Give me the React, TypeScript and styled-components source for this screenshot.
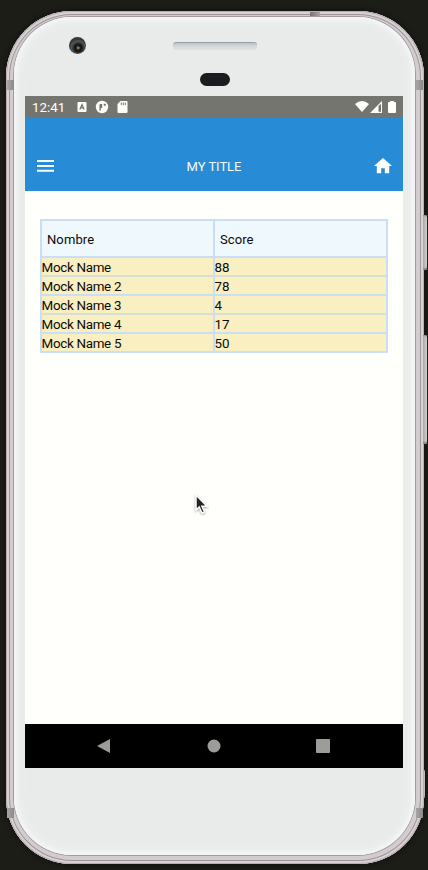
import React from "react";
import styled, { createGlobalStyle } from "styled-components";

const GlobalStyle = createGlobalStyle`
  * { box-sizing: border-box; }
  html, body { margin: 0; padding: 0; background: #1c1d17; }
  body { font-family: Roboto, "Liberation Sans", sans-serif; }
`;

const Desk = styled.main`
  width: 428px;
  height: 870px;
  padding: 11px 0 0 6px;
  overflow: hidden;
  background: #1c1d17;
`;

const Phone = styled.div`
  position: relative;
  width: 418px;
  height: 853px;
  border-radius: 66px;
  padding: 6px 9px 9px 8px;
  background: #d3cccf;
  box-shadow:
    inset 0 0 0 1px #b5aeb1,
    inset 0 0 0 3px #d9d1d4,
    inset 0 0 0 4px #9d969a,
    inset 0 0 0 6px #d3cccf,
    0 0 5px 1px #11120e;
`;

const Face = styled.div`
  display: flex;
  flex-direction: column;
  height: 838px;
  border-radius: 58px;
  padding: 0 12px 0 11px;
  background: #e8ebea;
  box-shadow:
    0 0 0 1px #a09a9d,
    inset 0 0 3px 3px #f3f5f4,
    inset 0 0 9px 5px #eef1f0;
`;

const Forehead = styled.div`
  display: grid;
  grid-template-columns: 148px 83px 147px;
  align-items: start;
  height: 79px;
  flex: none;
`;

const Camera = styled.div`
  width: 17px;
  height: 17px;
  margin: 20px 0 0 44px;
  border-radius: 50%;
  background: radial-gradient(circle at 54% 64%, #927346 0 1px, #17191b 2px 4px, #33383a 5px, #53575a 7px, #35393b 8.5px);
`;

const Earpiece = styled.div`
  display: flex;
  flex-direction: column;
  align-items: center;
  gap: 23px;
  padding-top: 25px;
`;

const Speaker = styled.div`
  width: 84px;
  height: 8px;
  border-radius: 3px;
  border-top: 1px solid #9aa1a3;
  background: linear-gradient(#c1c6c8 0 1px, #d3d7d8 3px, #dde2e4);
`;

const Sensor = styled.div`
  width: 30px;
  height: 13px;
  border-radius: 7px;
  background: #1a1c21;
`;

const Screen = styled.div`
  display: flex;
  flex-direction: column;
  width: 378px;
  height: 672px;
  flex: none;
  background: #fffffc;
`;

const StatusBar = styled.div`
  display: flex;
  align-items: center;
  height: 22px;
  padding: 0 6px 0 7px;
  background: #757570;
  color: #fffffc;
  svg { display: block; }
`;

const Clock = styled.span`
  width: 45px;
  padding-top: 1px;
  font-size: 13.3px;
  line-height: 21px;
`;

const Notices = styled.div`
  display: flex;
  flex: 1;
`;

const AppBar = styled.header`
  display: grid;
  grid-template-columns: 24px 1fr 24px;
  align-items: center;
  height: 73px;
  padding: 25px 8px 0 8px;
  background: #278cd5;
  color: #f4fbfc;
  svg { display: block; }
`;

const Title = styled.h1`
  margin: 0;
  text-align: center;
  font-size: 13px;
  font-weight: 400;
  line-height: 20px;
  letter-spacing: -0.05px;
`;

const Content = styled.section`
  height: 533px;
  padding: 28px 15px 0;
`;

const ScoreTable = styled.div`
  width: 348px;
  padding: 0 2px 2px;
  background: #cbdff4;
  color: #0b0b0a;
`;

const Row = styled.div<{ $header?: boolean; $muted?: boolean }>`
  display: grid;
  grid-template-columns: 171px 171px;
  grid-template-rows: ${(p) => (p.$header ? 35 : 17)}px;
  column-gap: 2px;
  height: ${(p) => (p.$header ? 37 : 19)}px;
  border-top: 2px solid ${(p) => (p.$muted ? "#d6dfd7" : "#c8dff7")};
`;

const Cell = styled.div<{ $header?: boolean; $numeric?: boolean }>`
  padding-left: ${(p) => (p.$header ? 5 : 0)}px;
  text-indent: ${(p) => (p.$header ? 0 : -0.5)}px;
  background: ${(p) => (p.$header ? "#eff8fd" : "#faefc0")};
  font-size: ${(p) => (p.$header ? 13 : 13.4)}px;
  line-height: ${(p) => (p.$header ? 38 : 19)}px;
  letter-spacing: ${(p) => (p.$header ? 0.1 : p.$numeric ? 0 : -0.3)}px;
  white-space: nowrap;
`;

const NavBar = styled.nav`
  display: flex;
  justify-content: space-between;
  align-items: center;
  height: 44px;
  padding: 0 73px 0 72px;
  background: #000;
  svg { display: block; }
`;

const SideKey = styled.div<{ $top: number; $height: number; $thin?: boolean }>`
  position: absolute;
  top: ${(p) => p.$top}px;
  right: ${(p) => (p.$thin ? -1 : -3)}px;
  width: ${(p) => (p.$thin ? 1 : 4)}px;
  height: ${(p) => p.$height}px;
  border-radius: 0 2px 2px 0;
  background: linear-gradient(90deg, #a9a4a6, #d2cfd0);
  box-shadow: inset 0 -3px 1px -1px #8f8b8d, inset 0 2px 1px -1px #8f8b8d;
`;

const AntennaBand = styled.div<{ $side: "left" | "right"; $top: number }>`
  position: absolute;
  top: ${(p) => p.$top}px;
  ${(p) => p.$side}: 1px;
  width: 7px;
  height: 10px;
  background: linear-gradient(90deg, #aaa4a6, #8d888a);
`;

const TopBand = styled.div`
  position: absolute;
  top: 1px;
  left: 304px;
  width: 10px;
  height: 4px;
  background: linear-gradient(90deg, #777174, #aaa3a6);
`;

const Pointer = styled.svg`
  position: absolute;
  left: 187px;
  top: 481px;
`;

const players = [
  { name: "Mock Name", score: 88 },
  { name: "Mock Name 2", score: 78 },
  { name: "Mock Name 3", score: 4 },
  { name: "Mock Name 4", score: 17 },
  { name: "Mock Name 5", score: 50 },
];

const NoticeIcons = () => (
  <svg width="52" height="14" viewBox="0 0 52 14">
    <rect x="0.5" y="2" width="9" height="10" rx="1" fill="#fffffc" />
    <path d="M2.8 9.5 5 4.5l2.2 5M3.7 7.8h2.7" fill="none" stroke="#757570" strokeWidth="1.2" />
    <circle cx="25" cy="7" r="6.2" fill="#fffffc" />
    <path d="M22.4 10.8V5.2q0-1.3 1.3-1.3h1.5v4h-1.4v2.9zM26.8 3.7h2v2h-2z" fill="#757570" />
    <path d="M43.5 1h6q1 0 1 1v10q0 1-1 1h-8q-1 0-1-1V4z" fill="#fffffc" />
    <path d="M44.3 2.5v2.7M46.3 2.5v2.7M48.3 2.5v2.7" stroke="#757570" strokeWidth="1" />
  </svg>
);

const SignalIcons = () => (
  <svg width="42" height="14" viewBox="0 0 42 14">
    <path d="M0 4Q7-1.8 14 4L7 12z" fill="#fffffc" />
    <path d="M27 1v12H15z" fill="#fffffc" />
    <path d="M23.5 6 26 3.8v8h-2.5z" fill="#757570" />
    <path d="M35 1h4v1h1q1 0 1 1v9q0 1-1 1h-6q-1 0-1-1V3q0-1 1-1h1z" fill="#fffffc" />
  </svg>
);

export default function App() {
  return (
    <>
      <GlobalStyle />
      <Desk>
        <Phone>
          <TopBand />
          <AntennaBand $side="left" $top={69} />
          <AntennaBand $side="right" $top={69} />
          <AntennaBand $side="left" $top={797} />
          <AntennaBand $side="right" $top={797} />
          <SideKey $top={204} $height={55} />
          <SideKey $top={324} $height={109} />
          <SideKey $top={759} $height={28} $thin />
          <Face>
            <Forehead>
              <Camera />
              <Earpiece>
                <Speaker />
                <Sensor />
              </Earpiece>
            </Forehead>
            <Screen>
              <StatusBar>
                <Clock>12:41</Clock>
                <Notices><NoticeIcons /></Notices>
                <SignalIcons />
              </StatusBar>
              <AppBar>
                <svg width="24" height="24" viewBox="0 0 24 24" fill="none">
                  <path d="M4 6h17M4 11h17M4 15.7h17" stroke="#f4ffff" strokeWidth="2" />
                </svg>
                <Title>MY TITLE</Title>
                <svg width="24" height="24" viewBox="0 0 24 24" fill="#fffffc">
                  <path d="M12 3 21 11h-2.8v7.3h-4.4v-5h-3.6v5H5.8V11H3z" />
                </svg>
              </AppBar>
              <Content>
                <ScoreTable>
                  <Row $header>
                    <Cell $header>Nombre</Cell>
                    <Cell $header $numeric>Score</Cell>
                  </Row>
                  {players.map((player, index) => (
                    <Row key={player.name} $muted={index === 1 || index === 3}>
                      <Cell>{player.name}</Cell>
                      <Cell $numeric>{player.score}</Cell>
                    </Row>
                  ))}
                </ScoreTable>
              </Content>
              <NavBar>
                <svg width="14" height="14" viewBox="0 0 14 14"><path d="M13 0v14L0 7z" fill="#9c9c98" /></svg>
                <svg width="14" height="14" viewBox="0 0 14 14"><circle cx="7" cy="7" r="6.5" fill="#9c9c98" /></svg>
                <svg width="14" height="14" viewBox="0 0 14 14"><rect width="14" height="14" rx="1" fill="#9c9c98" /></svg>
              </NavBar>
            </Screen>
          </Face>
          <Pointer width="16" height="24" viewBox="0 0 16 24">
            <path d="M3 3v15l3.2-3 2.8 6 2.5-1.2-2.6-5.5H14z" fill="#242422" stroke="#fff" strokeWidth="1.5" filter="drop-shadow(0 1px 1px #aaa)" />
          </Pointer>
        </Phone>
      </Desk>
    </>
  );
}
